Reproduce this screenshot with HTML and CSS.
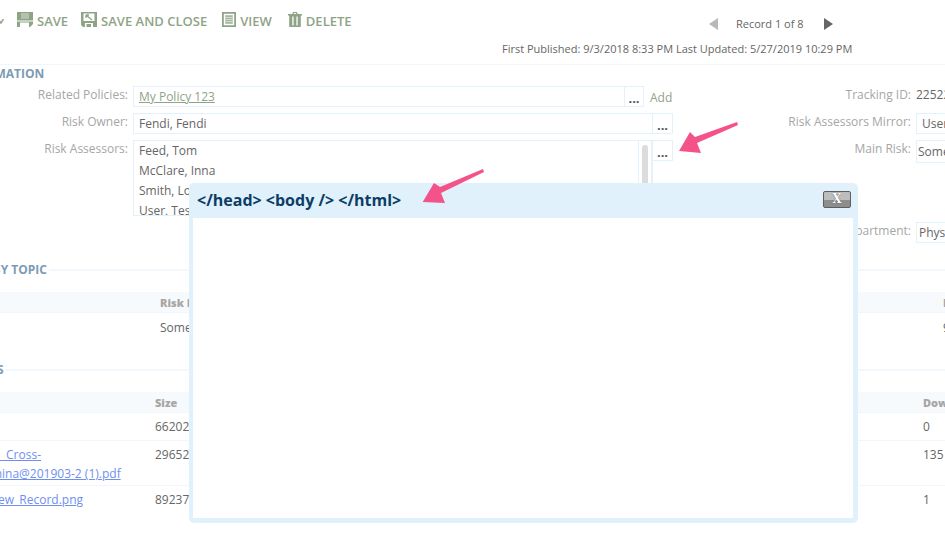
FILE: index.html
```html
<!DOCTYPE html>
<html lang="en">
<head>
<meta charset="utf-8">
<title>Record</title>
<link rel="stylesheet" href="styles.css">
</head>
<body>
<div class="page">
  <div class="top">
    <div class="toolbar">
      <svg class="stub" width="4" height="5" viewBox="0 0 4 5"><path d="M-2 0 L1 4 L3.500 0" fill="none" stroke="#8fa387" stroke-width="1.500"/></svg>
      <span class="tool save"><svg width="16" height="15" viewBox="0 0 16 15"><path fill="#8fa387" d="M0 0h16v8.500H0z"/><path fill="#8fa387" fill-rule="evenodd" d="M0 9.500h16V12l-3 3H0zM3 10.500V15h9v-4.500z"/><path fill="#b4c2ad" d="M4 1h8v6H4z"/></svg>SAVE</span>
      <span class="tool saveclose"><svg width="16" height="15" viewBox="0 0 16 15"><path fill="#8fa387" fill-rule="evenodd" d="M0 0h16v15h-4v-4H4v4H2L0 13zM2.500 1.500v7.500h11V1.500z"/><path fill="#8fa387" d="M5.500 12H10v3H5.500z"/><path stroke="#8fa387" stroke-width="1.300" fill="none" d="M5 3 11 8M5 3h3M5 3v3"/></svg>SAVE AND CLOSE</span>
      <span class="tool view"><svg width="14" height="15" viewBox="0 0 14 15"><path fill="#8fa387" fill-rule="evenodd" d="M0 0h14v15H0zM1.800 1.800v11.400h10.400V1.800z"/><path fill="#a7b7a0" d="M3.200 3.200h7.600v8.600H3.200z"/><path fill="#fff" d="M3.200 5h7.600v.6H3.200zM3.200 7.200h7.600v.6H3.200zM3.200 9.400h7.600v.6H3.200z"/></svg>VIEW</span>
      <span class="tool"><svg width="14" height="15" viewBox="0 0 14 15"><path fill="#8fa387" fill-rule="evenodd" d="M0 2h14v1.500h-1.200V15H1.200V3.500H0zM4.300 2 5 0h4l.7 2H8.400L8 1H6l-.4 1zM4.300 4.500v9h1.300v-9zM8.400 4.500v9h1.300v-9z"/></svg>DELETE</span>
    </div>
    <div class="record">
      <div class="pager"><span class="tri prev"></span><span>Record 1 of 8</span><span class="tri next"></span></div>
      <div class="published">First Published: 9/3/2018 8:33 PM Last Updated: 5/27/2019 10:29 PM</div>
    </div>
  </div>

  <section class="info">
    <h2 class="sec first">RISK INFORMATION</h2>
    <div class="form">
      <div class="col left">
        <div class="row"><label>Related Policies:</label><div class="box grow"><a class="plink" href="#">My Policy 123</a></div><span class="dots short">...</span><span class="add">Add</span></div>
        <div class="row"><label>Risk Owner:</label><div class="box grow wide">Fendi, Fendi</div><span class="dots">...</span></div>
        <div class="row top-align"><label>Risk Assessors:</label>
          <div class="box list">
            <div class="names">Feed, Tom<br>McClare, Inna<br>Smith, Lou<br>User, Test</div>
            <div class="track"><span class="thumb"></span></div>
          </div>
          <span class="dots">...</span>
        </div>
      </div>
      <div class="col right">
        <div class="row"><label>Tracking ID:</label><span class="plain">22522</span></div>
        <div class="row"><label>Risk Assessors Mirror:</label><div class="box fill">User, Test</div></div>
        <div class="row tall"><label>Main Risk:</label><div class="box fill tight">Some Risk</div></div>
        <div class="row dept"><label>Department:</label><div class="box fill tight2">Physical</div></div>
      </div>
    </div>
  </section>

  <section class="topic">
    <h2 class="sec">RISK BY TOPIC</h2>
    <div class="thead"><b class="c1">Risk Item</b><b class="c2">Impact</b></div>
    <div class="tr single"><span class="c1">Some Risk</span><span class="c2">9</span></div>
  </section>

  <section class="files">
    <h2 class="sec">ATTACHMENTS</h2>
    <div class="thead alt"><b class="n"></b><b class="s">Size</b><b class="d">Downloads</b></div>
    <div class="tr r1"><span class="n"></span><span class="s">66202</span><span class="d">0</span></div>
    <div class="tr r2"><span class="n"><a class="flink" href="#">Fendi_ Cross-<br>Karishina@201903-2 (1).pdf</a></span><span class="s">29652</span><span class="d">135</span></div>
    <div class="tr r3"><span class="n"><a class="flink" href="#">New_Record.png</a></span><span class="s">89237</span><span class="d">1</span></div>
  </section>

  <div class="modal">
    <div class="modal-head"><span class="modal-title">&lt;/head&gt; &lt;body /&gt; &lt;/html&gt;</span><span class="close">X</span></div>
    <div class="modal-body"></div>
  </div>

  <svg class="arrow a1" width="80" height="50" viewBox="666 120 80 50"><path fill="#f4538a" d="M679 151 L690 132 L695 137 L737 122 L738 125 L697 143 L701 153 Z"/></svg>
  <svg class="arrow a2" width="70" height="40" viewBox="420 168 70 40"><path fill="#f4538a" d="M422.700 202 L434 183 L440 187 L483 169 L484 172 L441 193 L445 203 Z"/></svg>
</div>
</body>
</html>
```
FILE: styles.css
```css
* { box-sizing: border-box; }
html, body { margin: 0; padding: 0; background: #fff; }
body { font-family: "Open Sans", sans-serif; font-size: 12px; color: #666; }
.page { position: relative; width: 945px; height: 535px; overflow: hidden; background: #fff; }

.top { display: flex; height: 65px; border-bottom: 1px solid #f0f7fc; }
.toolbar { display: flex; align-items: flex-start; padding-top: 12px; width: 500px; color: #8fa387; font-size: 13px; font-weight: 600; }
.stub { margin: 7px 13px 0 0; flex: none; }
.tool { display: flex; align-items: flex-start; gap: 4px; margin-right: 14px; line-height: 18px; }
.save { margin-right: 13px; }
.saveclose { margin-right: 15px; }
.view { margin-right: 16px; }
.tool svg { flex: none; }
.record { flex: 1; padding-top: 15px; font-size: 11px; color: #666; }
.pager { display: flex; align-items: center; margin-left: 209px; height: 17px; }
.tri { width: 0; height: 0; border-style: solid; border-width: 6px 0; }
.prev { border-left: 0; border-right: 9px solid #b9b9b9; border-top-color: transparent; border-bottom-color: transparent; margin-right: 18px; }
.next { border-right: 0; border-left: 9px solid #666; border-top-color: transparent; border-bottom-color: transparent; margin-left: 20px; }
.published { margin: 9px 0 0 2px; line-height: 15px; white-space: nowrap; }

.sec { margin: 0; font-size: 12px; font-weight: 700; color: #7d9bb5; line-height: 16px; white-space: nowrap; display: flex; align-items: center; }
.sec.first { margin-left: -73px; padding-top: 1px; }
.topic .sec, .files .sec { gap: 2px; }
.topic .sec { margin-left: -37px; }
.files .sec { margin-left: -85px; }
.topic .sec::after, .files .sec::after { content: ""; flex: 1; height: 2px; background: #f3f8fc; }

.info { height: 197px; }
.form { display: flex; padding-top: 4px; }
.col { display: flex; flex-direction: column; gap: 6px; flex: none; }
.left { width: 700px; }
.right { width: 245px; }
.row { display: flex; align-items: flex-start; height: 21px; line-height: 18px; }
.row label { width: 128px; flex: none; text-align: right; color: #a6a6a6; margin-right: 5px; white-space: nowrap; }
.right .row label { width: 211px; }
.box { border: 1px solid #e3f1fb; height: 21px; padding: 0 5px; line-height: 19px; white-space: nowrap; overflow: hidden; flex: none; }
.grow { width: 492px; }
.grow.wide { width: 520px; }
.dots { width: 20px; height: 21px; border: 1px solid #e3f1fb; border-left: 0; text-align: center; font-weight: 700; font-size: 13px; line-height: 22px; color: #555; flex: none; }
.dots.short { width: 19px; }
.add { margin-left: 6px; color: #8fa387; line-height: 24px; }
.plink { color: #8fa387; text-decoration: underline; }
.flink { color: #6f8ff0; text-decoration: underline; }
.top-align { height: 77px; }
.list { display: flex; width: 520px; height: 76px; padding: 0; }
.names { width: 506px; padding: 0 5px; line-height: 20px; }
.track { width: 14px; border-left: 1px solid #e3f1fb; border-right: 1px solid #e3f1fb; padding: 4px 3px; }
.thumb { display: block; height: 60px; background: #dcdcdc; border-radius: 4px; }
.plain { line-height: 18px; }
.fill { width: 80px; padding-left: 5px; }
.tight { height: 23px; padding-left: 1px; line-height: 21px; }
.tight2 { height: 21px; padding-left: 2px; }
.tall { height: 23px; }
.dept { margin-top: 53px; }

.thead { display: flex; height: 21px; background: #f7fafc; border-bottom: 1px solid #f0f6fb; color: #a6a6a6; line-height: 22px; font-size: 11px; font-weight: 700; }
.topic { height: 100px; }
.topic .thead { margin-top: 14px; }
.topic .c1 { margin-left: 160px; width: 783px; flex: none; white-space: nowrap; overflow: hidden; }
.tr { display: flex; white-space: nowrap; }
.single { line-height: 30px; }
.files .thead { margin-top: 14px; }
.n { width: 155px; flex: none; }
.s { width: 768px; flex: none; }
.d { flex: none; }
.files .tr { border-bottom: 1px solid #f0f6fb; line-height: 19px; padding-top: 4px; }
.r1 { height: 28px; }
.r2 { height: 45px; }
.r2 .n { margin-left: -33px; width: 188px; }
.files .r3 { height: 30px; border-bottom: 0; }
.r3 .n { margin-left: -11px; width: 166px; }

.modal { position: absolute; left: 189px; top: 183px; width: 669px; height: 340px; background: #e0f1fc; border-radius: 5px; padding: 0 5px 5px 4px; display: flex; flex-direction: column; }
.modal-head { height: 35px; display: flex; align-items: center; justify-content: space-between; padding-left: 4px; padding-right: 2px; flex: none; }
.modal-title { color: #0d3d66; font-size: 16px; font-weight: 700; line-height: 33px; margin-top: -1px; }
.close { width: 28px; height: 17px; margin-top: -3px; border: 1px solid #5e5e5e; border-radius: 2px; background: linear-gradient(#bdbdbd 0 50%, #8d8d8d 55% 100%); color: #fff; font: 700 12px/15px "DejaVu Serif", serif; text-align: center; text-shadow: 0 0 1px #333; }
.modal-body { flex: 1; background: #fff; }

.arrow { position: absolute; }
.a1 { left: 666px; top: 120px; }
.a2 { left: 420px; top: 168px; }
```
